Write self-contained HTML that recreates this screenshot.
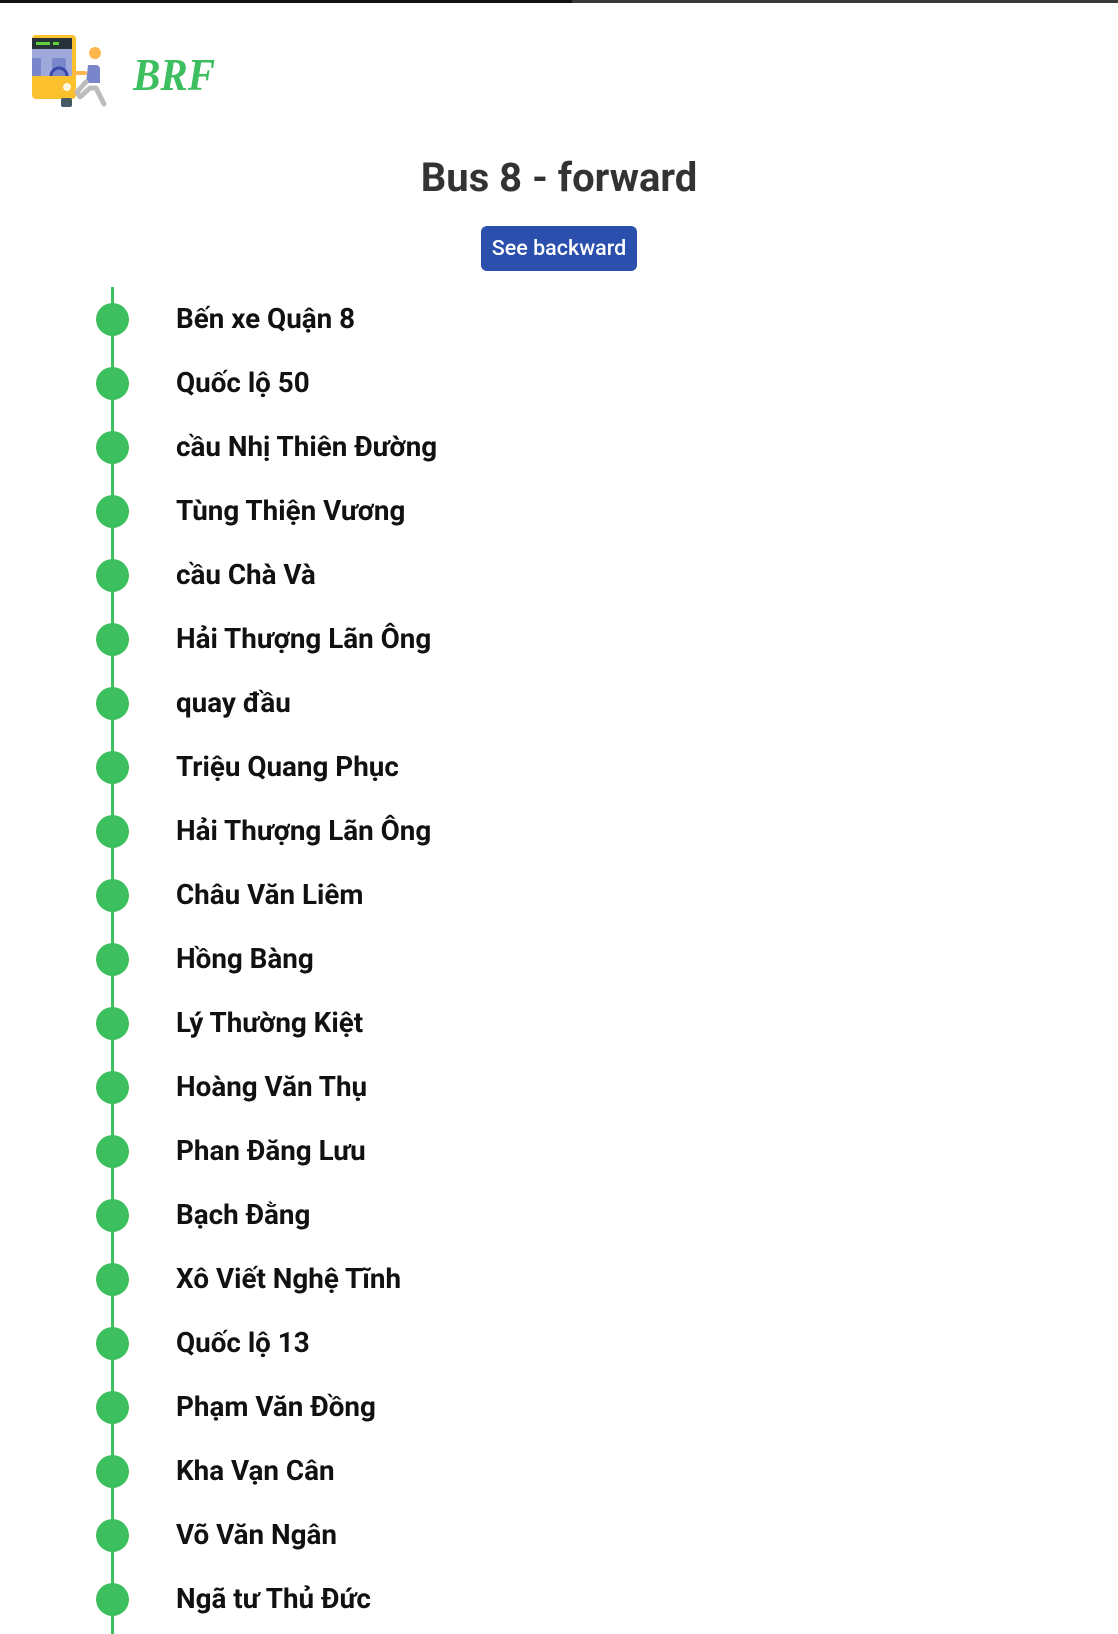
<!DOCTYPE html>
<html><head><meta charset="utf-8"><style>
html,body{margin:0;padding:0;background:#fff;}
body{width:1118px;height:1634px;position:relative;overflow:hidden;font-family:"Roboto","Liberation Sans",sans-serif;}
.topbar{position:absolute;left:0;top:0;width:572px;height:3px;background:#111;}
.topbar2{position:absolute;left:572px;top:0;width:546px;height:3px;background:#3a3a3a;}
.brf{position:absolute;left:133px;top:47px;font-family:"Liberation Serif",serif;font-style:italic;font-weight:bold;font-size:41px;color:#3dbf5f;line-height:50px;transform:scaleY(1.1);transform-origin:left top;}
h1{position:absolute;left:0;width:1118px;top:150px;margin:0;text-align:center;font-size:40px;font-weight:bold;color:#333;line-height:56px;}
.btn{position:absolute;left:481px;top:226px;width:156px;height:45px;background:#2b4fad;border-radius:6px;color:#fff;font-size:21.5px;font-weight:500;line-height:45px;text-align:center;}
.line{position:absolute;left:111px;top:287px;width:3px;height:1347px;background:#3dbf5f;}
.stop{position:absolute;left:0;height:40px;width:700px;}
.dot{position:absolute;left:96px;top:4px;width:33px;height:33px;border-radius:50%;background:#3dbf5f;}
.t{position:absolute;left:176px;top:0px;line-height:40px;font-size:27.8px;font-weight:bold;color:#111;white-space:nowrap;}
</style></head><body>
<div class="topbar"></div><div class="topbar2"></div>
<svg style="position:absolute;left:30px;top:33px" width="84" height="76" viewBox="30 33 84 76">
<rect x="32" y="35" width="44" height="64" rx="4" fill="#fbc02d"/>
<rect x="32" y="38" width="40" height="11" fill="#263238"/>
<rect x="36" y="42" width="14" height="3" fill="#5fd13a"/>
<rect x="53" y="42" width="6" height="3" fill="#5fd13a"/>
<rect x="32" y="49" width="40" height="27" fill="#9fa8da"/>
<rect x="32" y="58" width="9" height="18" rx="2" fill="#7986cb"/>
<rect x="52" y="58" width="14" height="18" rx="2" fill="#7986cb"/>
<path d="M51 76 a8 8 0 0 1 16 0" fill="none" stroke="#3949ab" stroke-width="3"/>
<circle cx="67" cy="87" r="4" fill="#fff8e1"/>
<rect x="61" y="98" width="11" height="9" rx="2" fill="#455a64"/>
<circle cx="95" cy="53" r="6" fill="#ffb74d"/>
<path d="M88 65 h8 a4 4 0 0 1 4 4 v14 h-14 z" fill="#7986cb"/>
<rect x="73" y="71" width="14" height="4" rx="2" fill="#ffb74d"/>
<path d="M86 82 L77 92 L80 97 L90 88 L96 88 L104 104" fill="none" stroke="#bdbdbd" stroke-width="5" stroke-linecap="round" stroke-linejoin="round"/>
</svg>
<div class="brf">BRF</div>
<h1>Bus 8 - forward</h1>
<div class="btn">See backward</div>
<div class="line"></div>
<div class="stop" style="top:299px"><div class="dot"></div><div class="t">Bến xe Quận 8</div></div>
<div class="stop" style="top:363px"><div class="dot"></div><div class="t">Quốc lộ 50</div></div>
<div class="stop" style="top:427px"><div class="dot"></div><div class="t">cầu Nhị Thiên Đường</div></div>
<div class="stop" style="top:491px"><div class="dot"></div><div class="t">Tùng Thiện Vương</div></div>
<div class="stop" style="top:555px"><div class="dot"></div><div class="t">cầu Chà Và</div></div>
<div class="stop" style="top:619px"><div class="dot"></div><div class="t">Hải Thượng Lãn Ông</div></div>
<div class="stop" style="top:683px"><div class="dot"></div><div class="t">quay đầu</div></div>
<div class="stop" style="top:747px"><div class="dot"></div><div class="t">Triệu Quang Phục</div></div>
<div class="stop" style="top:811px"><div class="dot"></div><div class="t">Hải Thượng Lãn Ông</div></div>
<div class="stop" style="top:875px"><div class="dot"></div><div class="t">Châu Văn Liêm</div></div>
<div class="stop" style="top:939px"><div class="dot"></div><div class="t">Hồng Bàng</div></div>
<div class="stop" style="top:1003px"><div class="dot"></div><div class="t">Lý Thường Kiệt</div></div>
<div class="stop" style="top:1067px"><div class="dot"></div><div class="t">Hoàng Văn Thụ</div></div>
<div class="stop" style="top:1131px"><div class="dot"></div><div class="t">Phan Đăng Lưu</div></div>
<div class="stop" style="top:1195px"><div class="dot"></div><div class="t">Bạch Đằng</div></div>
<div class="stop" style="top:1259px"><div class="dot"></div><div class="t">Xô Viết Nghệ Tĩnh</div></div>
<div class="stop" style="top:1323px"><div class="dot"></div><div class="t">Quốc lộ 13</div></div>
<div class="stop" style="top:1387px"><div class="dot"></div><div class="t">Phạm Văn Đồng</div></div>
<div class="stop" style="top:1451px"><div class="dot"></div><div class="t">Kha Vạn Cân</div></div>
<div class="stop" style="top:1515px"><div class="dot"></div><div class="t">Võ Văn Ngân</div></div>
<div class="stop" style="top:1579px"><div class="dot"></div><div class="t">Ngã tư Thủ Đức</div></div>
</body></html>
